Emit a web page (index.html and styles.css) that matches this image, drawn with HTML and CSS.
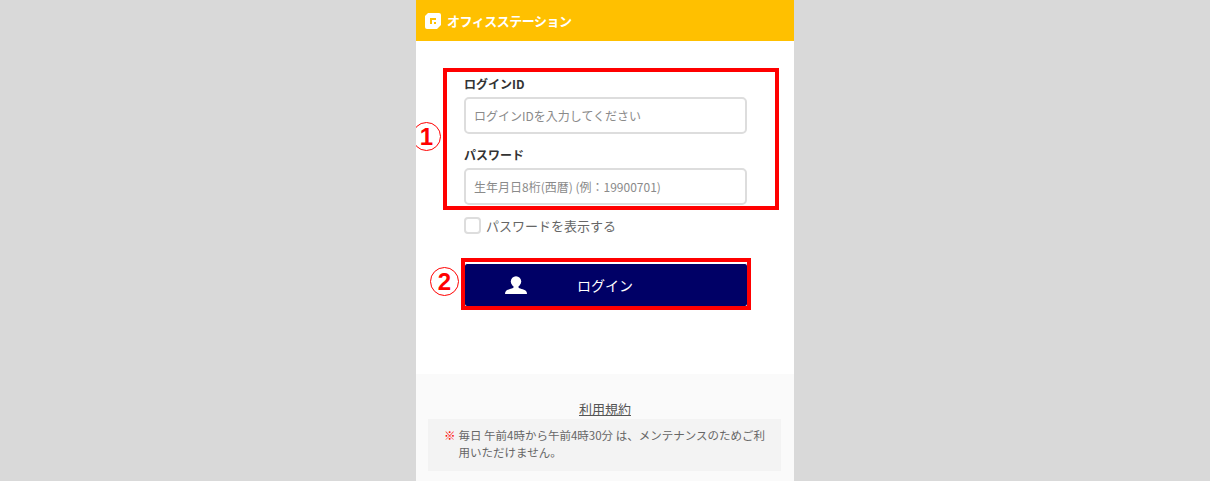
FILE: index.html
```html
<!DOCTYPE html>
<html lang="ja">
<head>
  <meta charset="UTF-8" />
  <meta name="viewport" content="width=device-width, initial-scale=1.0"/>
  <title>オフィスステーション ログイン</title>
  <link rel="stylesheet" href="styles.css">
</head>
<body>
<div class="phone">
  <header class="top-bar">
    <svg class="logo-mark" width="16" height="16" viewBox="0 0 16 16">
      <path fill="#fff" d="M3 0h11a2 2 0 0 1 2 2v10l-4 4H2a2 2 0 0 1-2-2V3z"/>
      <path fill="#ffc000" d="M5 5h6v6H5z"/>
      <path fill="#fff" d="M7 7h4v2H9v2H7z"/>
    </svg>
    <span class="logo-text">オフィスステーション</span>
  </header>

  <main class="login-form">
    <label class="field-label" for="loginId">ログインID</label>
    <input class="field-input" id="loginId" type="text" placeholder="ログインIDを入力してください">
    <label class="field-label second" for="password">パスワード</label>
    <input class="field-input" id="password" type="text" placeholder="生年月日8桁(西暦) (例：19900701)">
    <label class="show-pass">
      <span class="check-box"></span>
      パスワードを表示する
    </label>
    <button class="login-btn" type="button">
      <svg class="user-icon" width="22" height="18" viewBox="0 0 22 18">
        <circle cx="11" cy="5.5" r="5.2" fill="#fff"/>
        <path fill="#fff" d="M8.5 10h5v1.5c0 1 5.5 1.6 7.5 3.5q1 1 1 3H0q0-2 1-3c2-1.900 7.500-2.500 7.500-3.500z"/>
      </svg>
      <span class="login-label">ログイン</span>
    </button>
  </main>

  <footer class="foot">
    <a class="terms" href="#">利用規約</a>
    <div class="notice">
      <span class="notice-mark">※</span>
      <p class="notice-text">毎日 午前4時から午前4時30分 は、メンテナンスのためご利用いただけません。</p>
    </div>
  </footer>

  <!-- annotations drawn over the page -->
  <div class="mark-box mark-fields"></div>
  <div class="mark-box mark-button"></div>
  <div class="mark-num num-one">1</div>
  <div class="mark-num num-two">2</div>
</div>
</body>
</html>
```

FILE: styles.css
```css
html, body {
  margin: 0;
  height: 481px;
  overflow: hidden;
}

body {
  background-color: #d9d9d9;
  font-family: "Noto Sans CJK JP", "Noto Sans", sans-serif;
  color: #555;
}

.phone {
  position: relative;
  width: 378px;
  height: 481px;
  margin-left: 416px;
  background: #fff;
  overflow: hidden;
}

.top-bar {
  height: 41px;
  background: #ffc000;
  display: flex;
  align-items: center;
  gap: 6px;
  padding-left: 9px;
  box-sizing: border-box;
}

.logo-text {
  color: #fff;
  font-size: 13px;
  font-weight: 700;
  letter-spacing: -0.5px;
  white-space: nowrap;
}

.login-form {
  height: 333px;
  box-sizing: border-box;
  padding: 34px 47px 0 48px;
  display: flex;
  flex-direction: column;
  align-items: flex-start;
}

.field-label {
  font-size: 12px;
  line-height: 17px;
  font-weight: 700;
  color: #333;
  margin-bottom: 5px;
}

.field-label.second {
  margin-top: 12px;
}

.field-input {
  width: 283px;
  height: 37px;
  box-sizing: border-box;
  border: 2px solid #ddd;
  border-radius: 5px;
  padding: 0 8px;
  font-family: inherit;
  font-size: 12px;
  color: #555;
  background: #fff;
}

.field-input::placeholder {
  color: #8a8a8a;
  opacity: 1;
}

.show-pass {
  display: flex;
  align-items: center;
  gap: 5px;
  margin-top: 12px;
  font-size: 13px;
  line-height: 17px;
  color: #666;
}

.check-box {
  width: 17px;
  height: 17px;
  box-sizing: border-box;
  border: 2px solid #ddd;
  border-radius: 4px;
}

.login-btn {
  width: 284px;
  height: 44px;
  margin-top: 29px;
  padding: 0 0 0 40px;
  border: 1px solid #fff;
  border-radius: 3px;
  background: #000066;
  color: #fff;
  display: flex;
  align-items: center;
  font-family: inherit;
  font-size: 14px;
}

.login-label {
  margin-left: 50px;
}

.foot {
  height: 107px;
  background: #fafafa;
  box-sizing: border-box;
  padding-top: 26px;
  display: flex;
  flex-direction: column;
  align-items: center;
}

.terms {
  font-size: 13px;
  line-height: 18px;
  color: #555;
  text-decoration: underline;
}

.notice {
  width: 353px;
  height: 52px;
  margin-top: 1px;
  margin-right: 1px;
  box-sizing: border-box;
  padding: 8px 16px 0 16px;
  background: #f3f3f3;
  display: flex;
  gap: 3px;
  font-size: 11.500px;
  line-height: 17px;
}

.notice-mark {
  color: #f00;
  font-weight: 700;
}

.notice-text {
  margin: 0;
  flex: 1;
  color: #666;
}

.mark-box {
  position: absolute;
  box-sizing: border-box;
  border: 4px solid #f00;
}

.mark-fields {
  left: 27px;
  top: 68px;
  width: 336px;
  height: 142px;
}

.mark-button {
  left: 45px;
  top: 258px;
  width: 290px;
  height: 52px;
}

.mark-num {
  position: absolute;
  width: 29px;
  height: 29px;
  box-sizing: border-box;
  border: 1px solid #f00;
  border-radius: 50%;
  background: #fff;
  color: #f00;
  font-family: "Liberation Sans", sans-serif;
  font-size: 24px;
  font-weight: 700;
  line-height: 27px;
  text-align: center;
}

.num-one {
  left: -4px;
  top: 122px;
}

.num-two {
  left: 14px;
  top: 267px;
}
```
